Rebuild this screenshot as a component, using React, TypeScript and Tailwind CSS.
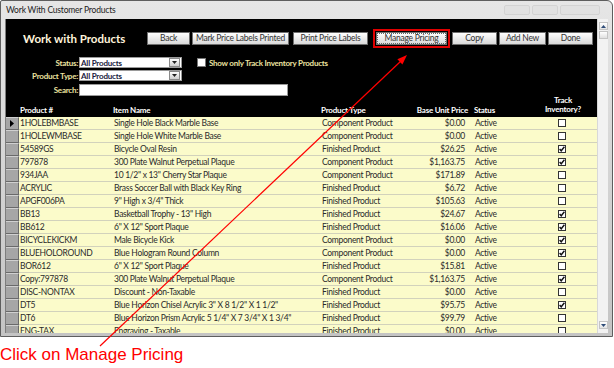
import React from 'react'

const FONT = "Lato,'Liberation Sans',Arial,sans-serif"

type Row = {
  code: string
  name: string
  type: string
  price: string
  track: boolean
}

const ROWS: Row[] = [
  { code: '1HOLEBMBASE', name: 'Single Hole Black Marble Base', type: 'Component Product', price: '$0.00', track: false },
  { code: '1HOLEWMBASE', name: 'Single Hole White Marble Base', type: 'Component Product', price: '$0.00', track: false },
  { code: '54589GS', name: 'Bicycle Oval Resin', type: 'Finished Product', price: '$26.25', track: true },
  { code: '797878', name: '300 Plate Walnut Perpetual Plaque', type: 'Component Product', price: '$1,163.75', track: true },
  { code: '934JAA', name: '10 1/2" x 13" Cherry Star Plaque', type: 'Component Product', price: '$171.89', track: false },
  { code: 'ACRYLIC', name: 'Brass Soccer Ball with Black Key Ring', type: 'Finished Product', price: '$6.72', track: false },
  { code: 'APGF006PA', name: '9" High x 3/4" Thick', type: 'Finished Product', price: '$105.63', track: false },
  { code: 'BB13', name: 'Basketball Trophy - 13" High', type: 'Finished Product', price: '$24.67', track: true },
  { code: 'BB612', name: '6" X 12" Sport Plaque', type: 'Finished Product', price: '$16.06', track: true },
  { code: 'BICYCLEKICKM', name: 'Male Bicycle Kick', type: 'Component Product', price: '$0.00', track: true },
  { code: 'BLUEHOLOROUND', name: 'Blue Hologram Round Column', type: 'Component Product', price: '$0.00', track: true },
  { code: 'BOR612', name: '6" X 12" Sport Plaque', type: 'Finished Product', price: '$15.81', track: false },
  { code: 'Copy:797878', name: '300 Plate Walnut Perpetual Plaque', type: 'Component Product', price: '$1,163.75', track: true },
  { code: 'DISC-NONTAX', name: 'Discount - Non-Taxable', type: 'Finished Product', price: '$0.00', track: false },
  { code: 'DT5', name: 'Blue Horizon Chisel Acrylic 3" X 8 1/2" X 1 1/2"', type: 'Finished Product', price: '$95.75', track: true },
  { code: 'DT6', name: 'Blue Horizon Prism Acrylic 5 1/4" X 7 3/4" X 1 3/4"', type: 'Finished Product', price: '$99.79', track: false },
  { code: 'ENG-TAX', name: 'Engraving - Taxable', type: 'Finished Product', price: '$0.00', track: false },
]

function Button({ label, width, focused }: { label: string; width: string; focused?: boolean }) {
  return (
    <div
      className={`${width} h-[13px] border border-[#6f6f6f] bg-gradient-to-b from-white to-[#d9d9d9] flex items-center justify-center text-[8.5px] leading-none text-[#333] whitespace-nowrap tracking-[-0.25px] ${
        focused ? 'outline outline-1 outline-dotted outline-[#666] -outline-offset-[2px]' : ''
      }`}
    >
      {label}
    </div>
  )
}

function Combo({ value }: { value: string }) {
  return (
    <div className="w-[103px] h-[11px] bg-white border border-[#9a9a9a] flex items-center">
      <span className="flex-1 pl-[1px] text-[8px] leading-none text-[#1a1a40] whitespace-nowrap tracking-[-0.2px]">{value}</span>
      <div className="w-[11px] h-[9px] mr-[1px] bg-gradient-to-b from-white to-[#cfcfcf] border border-[#8a8a8a] flex items-center justify-center">
        <svg width="5" height="3" viewBox="0 0 5 3">
          <path d="M0 0h5L2.5 3z" fill="#222" />
        </svg>
      </div>
    </div>
  )
}

function CheckBox({ checked }: { checked: boolean }) {
  return (
    <div className="w-[8px] h-[8px] border border-[#333] bg-white flex items-center justify-center">
      {checked && (
        <svg width="6" height="6" viewBox="0 0 6 6">
          <path d="M0.6 3l1.6 1.8L5.4 0.8" stroke="#111" strokeWidth="1.4" fill="none" />
        </svg>
      )}
    </div>
  )
}

export default function App() {
  return (
    <div className="relative w-[614px] h-[368px] bg-white overflow-hidden" style={{ fontFamily: FONT }}>
      {/* window */}
      <div className="w-[613px] h-[337px] border border-[#5e5e5e] rounded-tr-[6px] rounded-tl-[2px] bg-gradient-to-b from-[#e6e6e6] to-[#c4c4c4] flex flex-col">
        <div className="h-[18px] flex items-center pl-[5px] shrink-0">
          <span className="text-[8.5px] text-[#1c1c1c] leading-none whitespace-nowrap tracking-[-0.2px]">Work With Customer Products</span>
          <div className="ml-auto mr-[12px] flex gap-[2px] opacity-30">
            <div className="w-[26px] h-[10px] rounded-[2px] border border-[#aaa] bg-[#d8d8d8]" />
            <div className="w-[26px] h-[10px] rounded-[2px] border border-[#aaa] bg-[#d8d8d8]" />
            <div className="w-[40px] h-[10px] rounded-[2px] border border-[#aaa] bg-[#d8d8d8]" />
          </div>
        </div>

        <div className="flex flex-1 min-h-0 pl-[4px] pr-[4px] pb-[3px]">
          <div className="w-[1px] bg-[#7d7d7d]" />
          {/* main */}
          <div className="w-[591px] bg-black flex flex-col min-h-0">
            {/* top bar */}
            <div className="flex items-center mt-[13px] h-[13px]">
              <div className="w-[141px] pl-[17px] text-[11.5px] font-bold text-[#fff4dc] leading-none whitespace-nowrap">
                Work with Products
              </div>
              <Button label="Back" width="w-[43px]" />
              <div className="w-[2px]" />
              <Button label="Mark Price Labels Printed" width="w-[97px]" />
              <div className="w-[4px]" />
              <Button label="Print Price Labels" width="w-[75px]" />
              <div className="w-[8px]" />
              <div className="relative">
                <Button label="Manage Pricing" width="w-[71px]" focused />
                <div className="absolute -left-[3px] -right-[3px] -top-[3px] -bottom-[3px] border-2 border-[#e00000]" />
              </div>
              <div className="w-[5px]" />
              <Button label="Copy" width="w-[45px]" />
              <div className="w-[2px]" />
              <Button label="Add New" width="w-[47px]" />
              <div className="w-[2px]" />
              <Button label="Done" width="w-[45px]" />
            </div>

            {/* filters */}
            <div className="mt-[12px] flex flex-col gap-[2px] text-[8px] font-bold text-[#ece3a0] leading-none whitespace-nowrap tracking-[-0.25px]">
              <div className="flex items-center h-[11px]">
                <div className="w-[72px] text-right">Status:</div>
                <div className="w-[1px]" />
                <Combo value="All Products" />
                <div className="w-[15px]" />
                <div className="w-[9px] h-[9px] bg-white border border-[#777]" />
                <span className="ml-[3px]">Show only Track Inventory Products</span>
              </div>
              <div className="flex items-center h-[11px]">
                <div className="w-[72px] text-right">Product Type:</div>
                <div className="w-[1px]" />
                <Combo value="All Products" />
              </div>
              <div className="flex items-center h-[12px] mt-[1px]">
                <div className="w-[72px] text-right">Search:</div>
                <div className="w-[1px]" />
                <div className="w-[209px] h-[12px] bg-white border border-[#9a9a9a]" />
              </div>
            </div>

            {/* table header */}
            <div className="mt-[2px] h-[19px] flex items-end text-[8px] font-bold text-white leading-none pb-[3px] whitespace-nowrap tracking-[-0.2px]">
              <div className="w-[14px]" />
              <div className="w-[93px]">Product #</div>
              <div className="w-[208px]">Item Name</div>
              <div className="w-[98px]">Product Type</div>
              <div className="w-[49px] flex justify-end">
                <span>Base Unit Price</span>
              </div>
              <div className="w-[6px]" />
              <div className="w-[62px]">Status</div>
              <div className="w-[54px] text-center leading-[9px]">
                Track
                <br />
                Inventory?
              </div>
            </div>

            {/* body */}
            <div className="flex-1 min-h-0 overflow-hidden bg-[#fbfbca]">
              {ROWS.map((r, i) => (
                <div
                  key={r.code}
                  className="h-[13px] flex items-center border-b border-[#d2d2bc] text-[8.5px] text-[#2a2a2a] leading-none whitespace-nowrap tracking-[-0.3px]"
                >
                  <div className="w-[13px] h-[13px] -mb-[1px] bg-[#a6a6a6] border-r border-b border-t border-t-[#d0d0d0] border-r-[#6a6a6a] border-b-[#6a6a6a] flex items-center justify-center">
                    {i === 0 && (
                      <svg width="4" height="7" viewBox="0 0 4 7">
                        <path d="M0 0l4 3.5L0 7z" fill="#000" />
                      </svg>
                    )}
                  </div>
                  <div className="w-[1px]" />
                  <div className="w-[94px]">{r.code}</div>
                  <div className="w-[208px]">{r.name}</div>
                  <div className="w-[98px]">{r.type}</div>
                  <div className="w-[45px] text-right">{r.price}</div>
                  <div className="w-[10px]" />
                  <div className="w-[60px]">Active</div>
                  <div className="w-[54px] flex justify-center">
                    <CheckBox checked={r.track} />
                  </div>
                </div>
              ))}
            </div>
          </div>

          {/* scrollbar */}
          <div className="w-[11px] bg-[#f2f2f2] border-l border-[#d8d8d8] flex flex-col items-center pt-[3px] pb-[4px]">
            <div className="w-[9px] h-[8px] border border-[#c4c4c4] bg-gradient-to-b from-white to-[#e4e4e4] flex items-center justify-center">
              <svg width="5" height="3" viewBox="0 0 5 3">
                <path d="M0 3h5L2.5 0z" fill="#2e4c78" />
              </svg>
            </div>
            <div className="mt-[1px] w-[9px] h-[8px] border border-[#c4c4c4] bg-gradient-to-b from-white to-[#e0e0e0]" />
            <div className="flex-1" />
            <div className="w-[9px] h-[8px] border border-[#c4c4c4] bg-gradient-to-b from-white to-[#e4e4e4] flex items-center justify-center">
              <svg width="5" height="3" viewBox="0 0 5 3">
                <path d="M0 0h5L2.5 3z" fill="#2e4c78" />
              </svg>
            </div>
          </div>
        </div>
      </div>

      <p className="mt-[9px] text-[17px] leading-none text-[#ff0000]" style={{ fontFamily: "'Liberation Sans',Arial,sans-serif" }}>
        Click on Manage Pricing
      </p>

      {/* annotation arrow */}
      <svg className="absolute inset-0 pointer-events-none" width="614" height="368" viewBox="0 0 614 368">
        <line x1="100" y1="346" x2="401" y2="61" stroke="#ff0000" strokeWidth="1.2" />
        <path d="M407 55L402.4 64.6L397.4 59.3Z" fill="#ff0000" />
      </svg>
    </div>
  )
}
